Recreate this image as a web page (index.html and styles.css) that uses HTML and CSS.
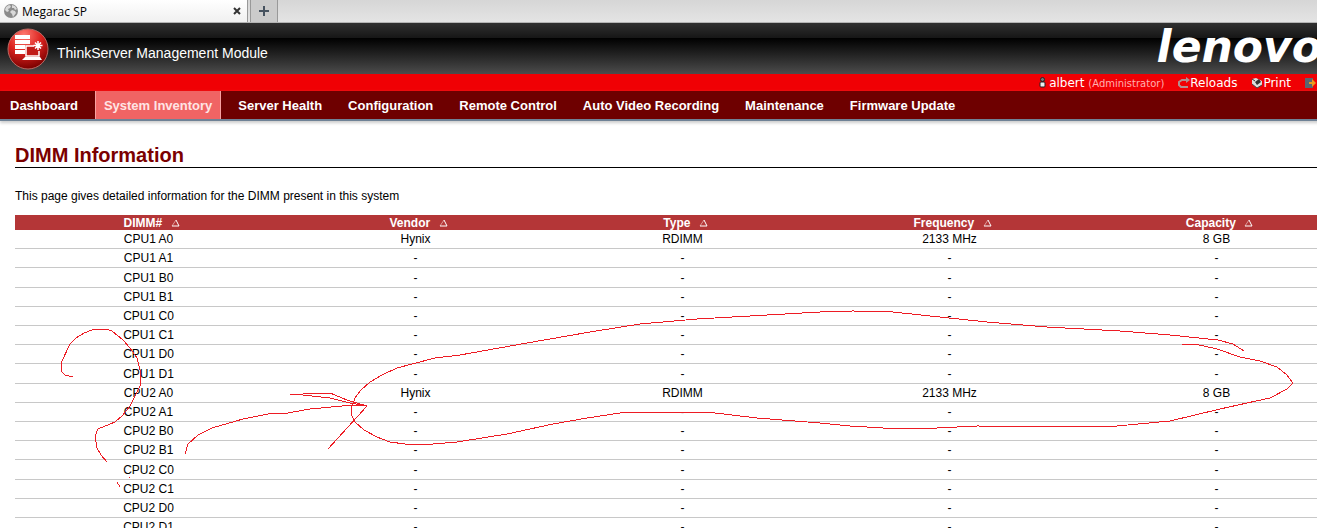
FILE: index.html
```html
<!DOCTYPE html>
<html lang="en">
<head>
    <meta charset="UTF-8">
    <title>Megarac SP</title>
    <link rel="stylesheet" href="styles.css">
</head>
<body>
    <!-- browser tabs -->
    <div class="tab-bar">
        <div class="tab">
            <svg class="globe" viewBox="0 0 14 14" aria-hidden="true">
                <circle cx="7" cy="7" r="7" fill="#8b8b8b"/>
                <path d="M2 3l3-2 2 1-1 2-2 1 1 2-2 1-2-2zM8 1l3 1 2 3-2 1-1-2-2 0zM8 6l3 1 1 2-3 4-1-3-2-2z" fill="#d9d9d9"/>
            </svg>
            <span class="tab-title">Megarac SP</span>
            <button class="tab-close" aria-label="Close tab">
                <svg viewBox="0 0 8 8"><path d="M1 1l6 6M7 1l-6 6" stroke="#333" stroke-width="2"/></svg>
            </button>
        </div>
        <button class="tab-new" aria-label="New tab">
            <svg viewBox="0 0 10 10"><path d="M5 0v10M0 5h10" stroke="#46525f" stroke-width="2"/></svg>
        </button>
    </div>

    <div class="page">
        <header class="header">
            <svg class="badge" viewBox="0 0 42 42" aria-hidden="true">
                <defs>
                    <radialGradient id="ball" cx="40%" cy="15%" r="85%">
                        <stop offset="0" stop-color="#ff7a70"/>
                        <stop offset="0.5" stop-color="#dc2420"/>
                        <stop offset="1" stop-color="#7c0000"/>
                    </radialGradient>
                </defs>
                <circle cx="21" cy="21" r="20" fill="url(#ball)" stroke="#b86a64"/>
                <path d="M8 7h15v4H8zM8 12h15v4H8zM8 17h10v4H8zM8 22h10v4H8z" fill="#fff"/>
                <path d="M27 18h-8v10h13v-5" fill="#c01c18" stroke="#fff" stroke-width="1.500"/>
                <path d="M18 29h15l2 3H15z" fill="#fff"/>
                <path d="M31 13v9M26.500 17.500h9M28 14.500l6 6M34 14.500l-6 6" stroke="#fff" stroke-width="1.500"/>
            </svg>
            <span class="product">ThinkServer Management Module</span>
            <span class="brand">lenovo</span>
        </header>

        <div class="user-bar">
            <span class="user">
                <svg class="icon-user" viewBox="0 0 7 11" aria-hidden="true">
                    <circle cx="3.500" cy="2.500" r="2" fill="#777" stroke="#222"/>
                    <rect x="1" y="5" width="5" height="5" rx="1" fill="#eee" stroke="#222"/>
                </svg>
                <span>albert <small>(Administrator)</small></span>
            </span>
            <a href="#">
                <svg class="icon" viewBox="0 0 12 12" aria-hidden="true">
                    <path d="M9 3H4L1 5v3l2 2h7" fill="none" stroke="#b09090" stroke-width="2"/>
                    <path d="M8 0l4 3-4 3z" fill="#b09090"/>
                </svg>Reloads
            </a>
            <a href="#">
                <svg class="icon" viewBox="0 0 12 12" aria-hidden="true">
                    <path d="M1 2l4-1 6 3v4l-5 3-5-4z" fill="#ddd"/>
                    <path d="M4 5l4-3 2 3-4 3z" fill="#333"/>
                    <path d="M1 7l5 4 5-3" fill="none" stroke="#444"/>
                    <path d="M1 2l3 2" stroke="#333"/>
                </svg>Print
            </a>
            <a href="#" aria-label="Logout">
                <svg class="icon" viewBox="0 0 12 12" aria-hidden="true">
                    <path d="M0 1h8v10H0z" fill="#5d6470"/>
                    <path d="M4 5h3V2l4 4-4 4V7H4z" fill="#e89a20"/>
                </svg>
            </a>
        </div>

        <nav class="menu">
            <a href="#">Dashboard</a>
            <a href="#" class="active">System Inventory</a>
            <a href="#">Server Health</a>
            <a href="#">Configuration</a>
            <a href="#">Remote Control</a>
            <a href="#">Auto Video Recording</a>
            <a href="#">Maintenance</a>
            <a href="#">Firmware Update</a>
        </nav>

        <main class="content">
            <h1>DIMM Information</h1>
            <p>This page gives detailed information for the DIMM present in this system</p>
            <table class="dimm-table">
                <thead>
                    <tr>
                        <th>DIMM# <svg class="sort" viewBox="0 0 9 8"><path d="M1 7L5 1" stroke="#d99"/><path d="M5 1l3 6H1" fill="none" stroke="#fff"/></svg></th>
                        <th>Vendor <svg class="sort" viewBox="0 0 9 8"><path d="M1 7L5 1" stroke="#d99"/><path d="M5 1l3 6H1" fill="none" stroke="#fff"/></svg></th>
                        <th>Type <svg class="sort" viewBox="0 0 9 8"><path d="M1 7L5 1" stroke="#d99"/><path d="M5 1l3 6H1" fill="none" stroke="#fff"/></svg></th>
                        <th>Frequency <svg class="sort" viewBox="0 0 9 8"><path d="M1 7L5 1" stroke="#d99"/><path d="M5 1l3 6H1" fill="none" stroke="#fff"/></svg></th>
                        <th>Capacity <svg class="sort" viewBox="0 0 9 8"><path d="M1 7L5 1" stroke="#d99"/><path d="M5 1l3 6H1" fill="none" stroke="#fff"/></svg></th>
                    </tr>
                </thead>
                <tbody>
                    <tr><td>CPU1 A0</td><td>Hynix</td><td>RDIMM</td><td>2133 MHz</td><td>8 GB</td></tr>
                    <tr><td>CPU1 A1</td><td>-</td><td>-</td><td>-</td><td>-</td></tr>
                    <tr><td>CPU1 B0</td><td>-</td><td>-</td><td>-</td><td>-</td></tr>
                    <tr><td>CPU1 B1</td><td>-</td><td>-</td><td>-</td><td>-</td></tr>
                    <tr><td>CPU1 C0</td><td>-</td><td>-</td><td>-</td><td>-</td></tr>
                    <tr><td>CPU1 C1</td><td>-</td><td>-</td><td>-</td><td>-</td></tr>
                    <tr><td>CPU1 D0</td><td>-</td><td>-</td><td>-</td><td>-</td></tr>
                    <tr><td>CPU1 D1</td><td>-</td><td>-</td><td>-</td><td>-</td></tr>
                    <tr><td>CPU2 A0</td><td>Hynix</td><td>RDIMM</td><td>2133 MHz</td><td>8 GB</td></tr>
                    <tr><td>CPU2 A1</td><td>-</td><td>-</td><td>-</td><td>-</td></tr>
                    <tr><td>CPU2 B0</td><td>-</td><td>-</td><td>-</td><td>-</td></tr>
                    <tr><td>CPU2 B1</td><td>-</td><td>-</td><td>-</td><td>-</td></tr>
                    <tr><td>CPU2 C0</td><td>-</td><td>-</td><td>-</td><td>-</td></tr>
                    <tr><td>CPU2 C1</td><td>-</td><td>-</td><td>-</td><td>-</td></tr>
                    <tr><td>CPU2 D0</td><td>-</td><td>-</td><td>-</td><td>-</td></tr>
                    <tr><td>CPU2 D1</td><td>-</td><td>-</td><td>-</td><td>-</td></tr>
                </tbody>
            </table>
        </main>
    </div>

    <!-- red pen marks over the table -->
    <svg class="pen" width="1317" height="528" viewBox="0 0 1317 528" aria-hidden="true">
        <polyline points="73,377 65,375 61,371 61,363 70,344 76,338 84,333 92,330 100,329 106,329 112,331 123,340 130,348 137,358 141,374 140,386 130,406 122,416 115,422 98,429 95,436 97,448 101,455 107,462"/>
        <polyline points="117,482 120,487"/>
        <polyline points="129,477 130,478"/>
        <polyline points="185,454 188,444 198,435 212,428 243,419 268,414 288,413 310,409 353,405 362,405 367,406 328,449"/>
        <polyline points="290,395 303,394 310,393 330,393 347,400 367,406"/>
        <polyline points="303,395 330,398 350,403 362,405"/>
        <polyline points="1244,351 1233,344 1218,340 1170,335 1120,331 1047,327 987,322 930,316 893,312 853,311 820,312 785,314 697,319 640,324 590,332 527,343 460,355 435,358 397,368 382,375 370,382 361,390 355,398 351,409 352,416 355,422 364,430 377,437 390,442 405,444 433,444 457,442 507,434 553,424 587,418 620,413 650,412 707,412 757,418 820,423 850,426 883,428 917,429 977,426 1093,427 1117,426 1170,421 1220,409 1247,403 1270,398 1287,389 1293,383 1287,375 1277,367 1260,361 1240,357 1217,349 1195,344 1182,344"/>
    </svg>
</body>
</html>
```
FILE: styles.css
```css
body {
    margin: 0;
    background-color: #fff;
    color: #000;
    font-family: "Liberation Sans", Arial, sans-serif;
    font-size: 12px;
    position: relative;
    overflow: hidden;
}
a {
    color: inherit;
    text-decoration: none;
}
button {
    border: none;
    background: none;
    padding: 0;
    display: flex;
    align-items: center;
    justify-content: center;
    cursor: pointer;
}

/* browser tabs */
.tab-bar {
    display: flex;
    gap: 2px;
    height: 22px;
    background: linear-gradient(#d6d6d6, #e4e4e4);
    border-bottom: 1px solid #b4b4b4;
}
.tab {
    display: flex;
    align-items: center;
    width: 248px;
    padding-left: 4px;
    background: linear-gradient(#fff, #f0f0f0);
    border-right: 1px solid #999;
    box-sizing: border-box;
}
.globe {
    width: 14px;
    height: 14px;
}
.tab-title {
    flex: 1;
    margin-left: 4px;
    font-family: "Open Sans", "Noto Sans", sans-serif;
    font-size: 12px;
}
.tab-close {
    margin-right: 6px;
}
.tab-close svg {
    width: 8px;
    height: 8px;
}
.tab-new {
    width: 28px;
    background-color: #cbcbcb;
    border: 1px solid #999;
    border-width: 0 1px;
}
.tab-new svg {
    width: 10px;
    height: 10px;
}

/* the page runs on past the right edge of the window */
.page {
    margin-right: -33px;
}
.header {
    display: flex;
    align-items: center;
    height: 51px;
    padding: 0 28px 0 7px;
    background: linear-gradient(#303030 0, #161616 15px, #000 15px, #4c4c4c 100%);
    color: #fff;
}
.badge {
    width: 42px;
    height: 42px;
}
.product {
    flex: 1;
    margin: 9px 0 0 8px;
    font-size: 14px;
}
.brand {
    margin-bottom: 4px;
    font-family: "DejaVu Sans", Verdana, sans-serif;
    font-size: 44px;
    font-weight: bold;
    font-style: italic;
    line-height: 44px;
}
.user-bar {
    display: flex;
    justify-content: flex-end;
    align-items: center;
    gap: 14px;
    height: 15px;
    padding: 2px 33px 0 0;
    background-color: #f00004;
    color: #fff;
    font-family: "DejaVu Sans", Verdana, sans-serif;
    font-size: 12px;
    line-height: 17px;
}
.user-bar small {
    font-size: 10px;
    color: #ffb0b0;
}
.user,
.user-bar a {
    display: flex;
    align-items: center;
}
.icon {
    width: 12px;
    height: 12px;
    margin-bottom: 2px;
}
.icon-user {
    width: 7px;
    height: 11px;
    margin: 0 3px 2px 0;
}
.menu {
    display: flex;
    gap: 8px;
    height: 28px;
    padding-left: 1px;
    background-color: #6e0000;
    border-bottom: 2px solid #6f8296;
    box-shadow: 0 2px 3px #ccc;
}
.menu a {
    padding: 2px 8px 0;
    border: 1px solid transparent;
    border-width: 0 1px;
    color: #fff;
    font-size: 13px;
    font-weight: bold;
    line-height: 26px;
}
.menu a.active {
    background-color: #f06464;
    border-color: #f8a0a0;
    color: #ffe4e4;
}

.content {
    padding-left: 15px;
}
h1 {
    margin: 22px 0 21px;
    border-bottom: 1px solid #000;
    color: #7b0000;
    font-size: 20px;
    line-height: 24px;
}
p {
    margin: 0 0 12px;
    line-height: 14px;
}
.dimm-table {
    width: 100%;
    table-layout: fixed;
    border-collapse: collapse;
    text-align: center;
}
.dimm-table th {
    padding: 2px 0 0 6px;
    background-color: #b43637;
    color: #fff;
    line-height: 13px;
}
.dimm-table td {
    height: 18px;
    padding: 0;
    border-bottom: 1px solid #c8c8c8;
    line-height: 18px;
}
.dimm-table tbody tr:nth-child(5n+3) td {
    height: 19px;
}
.sort {
    width: 9px;
    height: 8px;
    margin-left: 5px;
}

.pen {
    position: absolute;
    top: 0;
    left: 0;
    pointer-events: none;
}
.pen polyline {
    fill: none;
    stroke: #ed1c24;
    stroke-width: 1;
    shape-rendering: crispEdges;
}
```
